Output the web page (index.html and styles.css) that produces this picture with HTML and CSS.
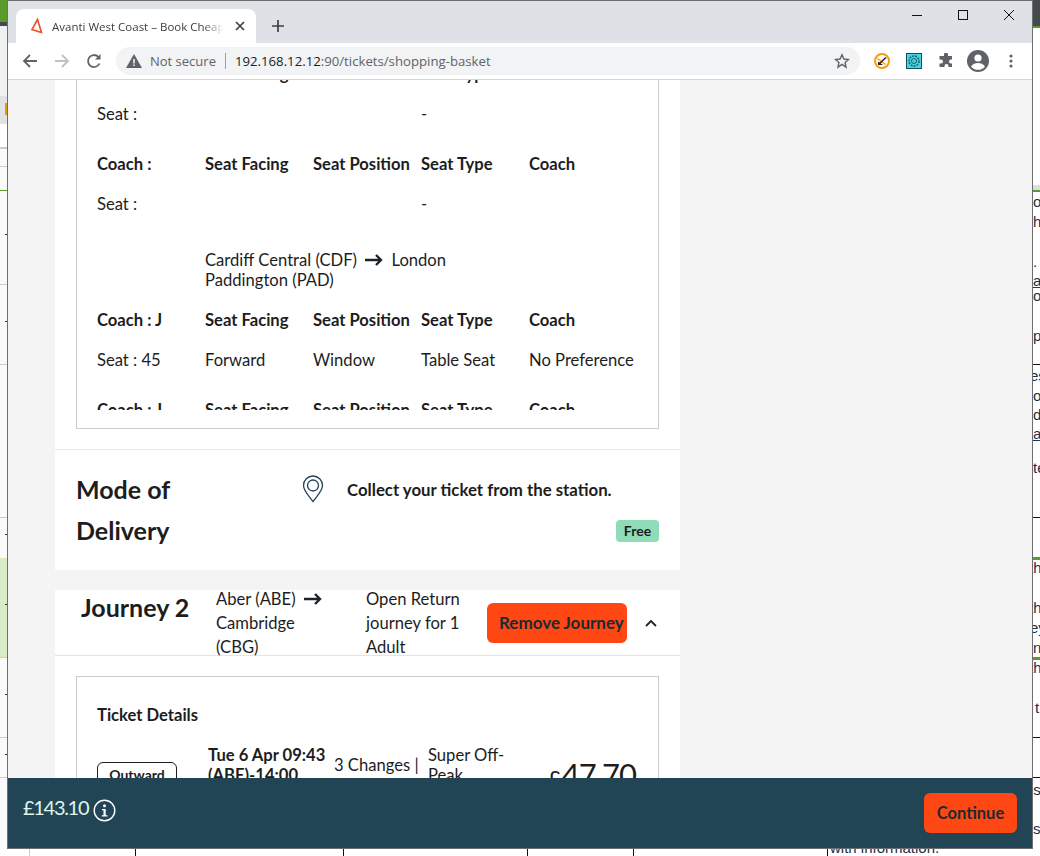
FILE: index.html
```html
<!DOCTYPE html>
<html>
	<head>
		<meta charset="UTF-8">
		<title>Avanti West Coast</title>
		<link rel="stylesheet" href="styles.css">
	</head>
	<body>
		<!-- desktop behind the browser window -->
		<svg class="desktop" width="1040" height="856" viewBox="0 0 1040 856">
			<rect x="0" y="0" width="8" height="22" fill="#5c9a2c"/>
			<rect x="0" y="22" width="8" height="4" fill="#44484f"/>
			<rect x="0" y="26" width="8" height="70" fill="#f0f0f0"/>
			<rect x="0" y="96" width="8" height="28" fill="#e2e2e2"/>
			<rect x="5" y="103" width="3" height="12" fill="#e09a10"/>
			<rect x="0" y="147" width="8" height="703" fill="#fafafa"/>
			<rect x="0" y="147" width="8" height="2" fill="#ccc"/>
			<rect x="0" y="166" width="8" height="1" fill="#ccc"/>
			<rect x="0" y="190" width="8" height="1" fill="#5c9a2c"/>
			<rect x="0" y="284" width="8" height="1" fill="#ccc"/>
			<rect x="0" y="364" width="8" height="1" fill="#ccc"/>
			<rect x="0" y="517" width="8" height="1" fill="#ccc"/>
			<rect x="0" y="558" width="8" height="100" fill="#d8ecc6"/>
			<rect x="0" y="657" width="8" height="1" fill="#ccc"/>
			<rect x="0" y="737" width="8" height="1" fill="#ccc"/>
			<rect x="0" y="777" width="8" height="1" fill="#ccc"/>
			<rect x="5" y="234" width="3" height="1" fill="#333"/>
			<rect x="5" y="321" width="3" height="1" fill="#333"/>
			<rect x="5" y="534" width="3" height="1" fill="#333"/>
			<rect x="5" y="604" width="3" height="1" fill="#333"/>
			<rect x="5" y="694" width="3" height="1" fill="#333"/>
			<rect x="5" y="754" width="3" height="1" fill="#333"/>
			<rect x="1032" y="0" width="8" height="26" fill="#44484f"/>
			<rect x="1032" y="26" width="8" height="2" fill="#5c9a2c"/>
			<rect x="1032" y="185" width="8" height="5" fill="#ddd"/>
			<rect x="1032" y="190" width="8" height="2" fill="#5c9a2c"/>
			<rect x="1032" y="364" width="8" height="1" fill="#111"/>
			<rect x="1032" y="517" width="8" height="1" fill="#111"/>
			<rect x="1032" y="557" width="8" height="3" fill="#5c9a2c"/>
			<rect x="1032" y="657" width="8" height="3" fill="#5c9a2c"/>
			<rect x="1032" y="737" width="8" height="1" fill="#111"/>
			<rect x="1032" y="777" width="8" height="1" fill="#111"/>
			<rect x="1033" y="287" width="7" height="1" fill="#1b3a5c"/>
			<rect x="1033" y="440" width="7" height="1" fill="#1b3a5c"/>
			<rect x="29" y="849" width="1" height="7" fill="#ccc"/>
			<rect x="135" y="849" width="1" height="7" fill="#111"/>
			<rect x="343" y="849" width="1" height="7" fill="#111"/>
			<rect x="527" y="849" width="1" height="7" fill="#111"/>
			<rect x="633" y="849" width="1" height="7" fill="#111"/>
			<rect x="827" y="849" width="1" height="7" fill="#111"/>
			<g class="desktop-text">
				<text x="1033" y="207">o</text>
				<text x="1033" y="227">h</text>
				<text x="1033" y="267">.</text>
				<text x="1033" y="286">at</text>
				<text x="1033" y="301">o</text>
				<text x="1033" y="341">p</text>
				<text x="1030" y="381">es</text>
				<text x="1033" y="401">o</text>
				<text x="1033" y="420">d</text>
				<text x="1033" y="439">at</text>
				<text x="1033" y="473">te</text>
				<text x="1029" y="573">th</text>
				<text x="1029" y="613">th</text>
				<text x="1030" y="633">ey</text>
				<text x="1033" y="653">n</text>
				<text x="1029" y="673">th</text>
				<text x="1035" y="713">t</text>
				<text x="1025" y="795">os</text>
				<text x="1033" y="834">s</text>
				<text x="830" y="853">with information.</text>
			</g>
		</svg>

		<div class="window">
			<div class="tabstrip">
				<div class="tab">
					<svg class="tab-logo" width="14" height="16" viewBox="0 0 14 16">
						<path d="M7.500 1.500 2 11.500l9.500 3z M7.500 1.500l4 13" fill="none" stroke="#f04e23" stroke-width="1.600"/>
					</svg>
					<span class="tab-title">Avanti West Coast – Book Cheap Train Tickets</span>
					<svg class="tab-close" width="10" height="10" viewBox="0 0 10 10">
						<path d="M1 1l8 8M9 1l-8 8" stroke="#3c4043" stroke-width="1.700"/>
					</svg>
				</div>
				<svg class="tab-new" width="12" height="12" viewBox="0 0 12 12">
					<path d="M6 0v12M0 6h12" stroke="#3c4043" stroke-width="1.700"/>
				</svg>
				<div class="win-btns">
					<svg width="10" height="10" viewBox="0 0 10 10"><path d="M0 5.500h10" stroke="#111"/></svg>
					<svg width="10" height="10" viewBox="0 0 10 10"><rect x=".5" y=".5" width="9" height="9" fill="none" stroke="#111"/></svg>
					<svg width="10" height="10" viewBox="0 0 10 10"><path d="M0 0l10 10M10 0L0 10" stroke="#111"/></svg>
				</div>
			</div>

			<div class="toolbar">
				<svg class="nav-btn" width="16" height="16" viewBox="0 0 16 16">
					<path d="M15 8H2M8 2 2 8l6 6" fill="none" stroke="#5f6368" stroke-width="1.800"/>
				</svg>
				<svg class="nav-btn" width="16" height="16" viewBox="0 0 16 16">
					<path d="M1 8h13M8 2l6 6-6 6" fill="none" stroke="#bdc1c6" stroke-width="1.800"/>
				</svg>
				<svg class="nav-btn" width="16" height="16" viewBox="0 0 16 16">
					<path d="M13.500 10.500A6 6 0 1 1 12.300 3.800" fill="none" stroke="#5f6368" stroke-width="1.800"/>
					<path d="M14.500 1v5.500H9z" fill="#5f6368"/>
				</svg>
				<div class="omnibox">
					<svg width="16" height="14" viewBox="0 0 16 14">
						<path d="M8 0l8 14H0z" fill="#5f6368"/>
						<path d="M7.200 5h1.600v4.500H7.200zM7.200 10.500h1.600v1.600H7.200z" fill="#f1f3f4"/>
					</svg>
					<span class="not-secure">Not secure</span>
					<span class="omni-sep"></span>
					<span class="url"><b>192.168.12.12</b>:90/tickets/shopping-basket</span>
					<svg class="star" width="16" height="16" viewBox="0 0 16 16">
						<path d="M8 1.800l1.900 4.200 4.600.5-3.400 3.100.9 4.500L8 11.400l-4 2.700.9-4.500L1.500 6.500l4.600-.5z" fill="none" stroke="#5f6368" stroke-width="1.400"/>
					</svg>
				</div>
				<div class="ext-icons">
					<svg width="16" height="16" viewBox="0 0 16 16">
						<circle cx="8" cy="8" r="7" fill="#fff" stroke="#f59c12" stroke-width="2"/>
						<path d="M3.500 5.500l8 6" stroke="#f59c12" stroke-width="1.400"/>
						<path d="M12 4.500 5.500 10.500" stroke="#222" stroke-width="1.600"/>
						<path d="M4 8.500l5 3.500H4z" fill="#222"/>
					</svg>
					<svg width="16" height="16" viewBox="0 0 16 16">
						<rect x=".5" y=".5" width="15" height="15" fill="#45d4e4" stroke="#1d4a5c"/>
						<circle cx="8" cy="8" r="5" fill="none" stroke="#1d5c70" stroke-width="1.500" stroke-dasharray="2 1"/>
						<circle cx="8" cy="8" r="2.500" fill="none" stroke="#1d5c70"/>
					</svg>
					<svg width="16" height="16" viewBox="0 0 16 16">
						<path d="M6 1.500a2 2 0 0 1 4 0V3h4v3.500h-1a2 2 0 0 0 0 4h1V14h-3.500v-1a2 2 0 0 0-4 0v1H1.500v-3.500H3a2 2 0 0 0 0-4H1.500V3H6z" fill="#5f6368"/>
					</svg>
					<svg class="avatar" width="22" height="22" viewBox="0 0 22 22">
						<circle cx="11" cy="11" r="11" fill="#5f6368"/>
						<circle cx="11" cy="8" r="3.600" fill="#fff"/>
						<path d="M4 16.500c1.500-2.500 4.500-3.500 7-3.500s5.500 1 7 3.500a9 9 0 0 1-14 0z" fill="#fff"/>
					</svg>
					<svg class="dots" width="4" height="14" viewBox="0 0 4 14">
						<circle cx="2" cy="2" r="1.600" fill="#5f6368"/>
						<circle cx="2" cy="7" r="1.600" fill="#5f6368"/>
						<circle cx="2" cy="12" r="1.600" fill="#5f6368"/>
					</svg>
				</div>
			</div>

			<div class="viewport">
				<div class="basket">
					<div class="panel-wrap seats-wrap">
						<div class="panel seats">
							<div class="seat-list">
								<div class="seat-row head">
									<span>Coach :</span><span>Seat Facing</span><span>Seat Position</span><span>Seat Type</span><span>Coach</span>
								</div>
								<div class="seat-row value">
									<span>Seat :</span><span></span><span></span><span>-</span><span></span>
								</div>
								<div class="seat-row head">
									<span>Coach :</span><span>Seat Facing</span><span>Seat Position</span><span>Seat Type</span><span>Coach</span>
								</div>
								<div class="seat-row value before-route">
									<span>Seat :</span><span></span><span></span><span>-</span><span></span>
								</div>
								<div class="route-row">
									Cardiff Central (CDF)
									<svg class="arrow" width="18" height="12" viewBox="0 0 18 12"><path d="M0 6h16M11 1l5 5-5 5" fill="none" stroke="#1d2329" stroke-width="2.400"/></svg>
									London Paddington (PAD)
								</div>
								<div class="seat-row head">
									<span>Coach : J</span><span>Seat Facing</span><span>Seat Position</span><span>Seat Type</span><span>Coach</span>
								</div>
								<div class="seat-row value">
									<span>Seat : 45</span><span>Forward</span><span>Window</span><span>Table Seat</span><span>No Preference</span>
								</div>
								<div class="seat-row head">
									<span>Coach : J</span><span>Seat Facing</span><span>Seat Position</span><span>Seat Type</span><span>Coach</span>
								</div>
							</div>
						</div>
					</div>

					<div class="delivery">
						<h2 class="delivery-title">Mode of Delivery</h2>
						<div class="delivery-info">
							<div class="delivery-line">
								<svg width="22" height="28" viewBox="0 0 22 28">
									<path d="M11 26.500C6 20 1.500 15.500 1.500 10.500a9.500 9.500 0 0 1 19 0C20.500 15.500 16 20 11 26.500z" fill="none" stroke="#224556" stroke-width="1.300"/>
									<circle cx="11" cy="10.500" r="5.500" fill="none" stroke="#224556" stroke-width="1.300"/>
								</svg>
								<strong>Collect your ticket from the station.</strong>
							</div>
							<span class="free">Free</span>
						</div>
					</div>

					<div class="journey-head">
						<h2 class="journey-title">Journey 2</h2>
						<div class="journey-route">
							Aber (ABE)
							<svg class="arrow" width="18" height="12" viewBox="0 0 18 12"><path d="M0 6h16M11 1l5 5-5 5" fill="none" stroke="#1d2329" stroke-width="2.400"/></svg>
							Cambridge (CBG)
						</div>
						<div class="journey-type">Open Return journey for 1 Adult</div>
						<button class="btn-remove">Remove Journey</button>
						<svg class="chevron" width="12" height="8" viewBox="0 0 12 8"><path d="M1 7l5-5 5 5" fill="none" stroke="#1d2329" stroke-width="1.800"/></svg>
					</div>

					<div class="panel-wrap">
						<div class="panel ticket">
							<div class="ticket-title">Ticket Details</div>
							<div class="ticket-row">
								<span class="pill">Outward</span>
								<div class="ticket-time">Tue 6 Apr 09:43 (ABE)-14:00</div>
								<div class="ticket-changes">3 Changes |</div>
								<div class="ticket-fare">Super Off-Peak</div>
								<div class="ticket-price"><small>£</small>47.70</div>
							</div>
						</div>
					</div>
				</div>
			</div>

			<div class="footer">
				<span class="total">£143.10</span>
				<svg class="info" width="23" height="23" viewBox="0 0 23 23">
					<circle cx="11.500" cy="11.500" r="10.300" fill="none" stroke="#fff" stroke-width="1.400"/>
					<circle cx="11.500" cy="6.800" r="1.500" fill="#fff"/>
					<path d="M9 10h3.700v6.200H14.500v1.300H8.800v-1.300h1.700v-4.900H9z" fill="#fff"/>
				</svg>
				<button class="btn-continue">Continue</button>
			</div>
		</div>
	</body>
</html>
```

FILE: styles.css
```css
*{margin: 0;padding: 0;box-sizing: border-box;}
html,body{width: 1040px;height: 856px;overflow: hidden;}
body{position: relative;background: #fff;font-family: "Lato","Noto Sans",sans-serif;color: #1d1d1d;}

.desktop{position: absolute;left: 0;top: 0;}
.desktop-text{font-family: "Liberation Sans",sans-serif;font-size: 15px;fill: #1b2f4c;}

.window{position: absolute;left: 7px;top: 0;width: 1026px;height: 849px;border: 1px solid #6e6e6e;display: flex;flex-direction: column;overflow: hidden;}

/* browser chrome */
.tabstrip{height: 42px;flex: none;background: #dee1e6;display: flex;align-items: flex-end;padding-left: 8px;}
.tab{width: 240px;height: 34px;background: #fff;border-radius: 8px 8px 0 0;display: flex;align-items: center;padding: 0 11px 0 14px;font-family: "Open Sans",sans-serif;font-size: 11.5px;color: #3c4043;}
.tab-logo{flex: none;margin-right: 8px;}
.tab-title{flex: 1;white-space: nowrap;overflow: hidden;-webkit-mask-image: linear-gradient(to right,#000 88%,transparent);mask-image: linear-gradient(to right,#000 88%,transparent);}
.tab-close{flex: none;margin-left: 11px;}
.tab-new{flex: none;margin: 0 0 11px 16px;}
.win-btns{margin-left: auto;align-self: flex-start;display: flex;gap: 36px;padding: 9px 18px 0 0;}

.toolbar{height: 37px;flex: none;background: #fff;border-bottom: 1px solid #d5d5d5;display: flex;align-items: center;padding-left: 14px;}
.nav-btn{flex: none;margin-right: 16px;}
.omnibox{width: 744px;height: 28px;margin-left: -2px;background: #f1f3f4;border-radius: 14px;display: flex;align-items: center;padding: 0 10px;font-family: "Open Sans",sans-serif;font-size: 13px;}
.not-secure{color: #5f6368;margin-left: 8px;white-space: nowrap;}
.omni-sep{width: 1px;height: 16px;background: #9aa0a6;margin: 0 9px;}
.url{color: #5f6368;white-space: nowrap;font-size: 13.2px;}
.url b{font-weight: 400;color: #202124;}
.star{margin-left: auto;}
.ext-icons{display: flex;align-items: center;gap: 16px;margin-left: 14px;}
.avatar{margin: 0 -3px;}
.dots{margin-left: 7px;}

/* page */
.viewport{flex: 1;min-height: 0;background: #f4f4f4;overflow: hidden;}
.basket{width: 625px;margin: -40px 0 0 47px;font-size: 16.6px;}
.panel-wrap{background: #fff;padding: 20px 21px 0;}
.panel{border: 1px solid #ccc;background: #fff;}
.seats-wrap{padding-top: 0;padding-bottom: 20px;}
.seats{height: 389px;padding: 0 20px 19px;}
.seat-list{height: 369px;overflow: hidden;padding-top: 23px;line-height: 20px;}
.seat-row{display: grid;grid-template-columns: repeat(5,108px);}
.seat-row span{white-space: nowrap;}
.seat-row.head{font-weight: 700;margin-bottom: 20px;}
.seat-row.value{margin-bottom: 30px;}
.seat-row.before-route{margin-bottom: 36px;}
.route-row{margin: 0 0 20px 108px;width: 270px;}
.arrow{margin: 0 4px;}

.delivery{background: #fff;border-top: 1px solid #e8e8e8;height: 121px;padding: 19px 21px 0;display: flex;}
.delivery-title{width: 226px;flex: none;font-size: 25px;line-height: 40.5px;font-weight: 700;padding-right: 100px;}
.delivery-info{flex: 1;display: flex;flex-direction: column;align-items: flex-end;}
.delivery-line{width: 100%;height: 38px;margin: 1px 0 2px;display: flex;align-items: center;gap: 23px;font-size: 16.8px;}
.free{margin-top: 10px;width: 43px;height: 22px;border-radius: 4px;background: #8fdcb9;font-size: 14px;font-weight: 700;line-height: 22px;text-align: center;}

.journey-head{margin-top: 20px;height: 66px;background: #fff;border-bottom: 1px solid #e4e4e4;display: flex;align-items: center;line-height: 24px;}
.journey-title{width: 161px;flex: none;padding-left: 26px;font-size: 25px;font-weight: 700;margin-bottom: 31px;white-space: nowrap;}
.journey-route{width: 150px;flex: none;padding-right: 40px;}
.journey-route .arrow{margin: 0 0 0 4px;}
.journey-type{width: 121px;flex: none;padding-right: 15px;}
.btn-remove{width: 140px;height: 40px;flex: none;border: 0;border-radius: 6px;background: #fe4713;color: #1b2a33;font-family: inherit;font-size: 17px;font-weight: 700;text-align: left;padding-left: 12px;white-space: nowrap;}
.chevron{margin-left: 18px;}

.ticket{height: 200px;padding: 0 20px;}
.ticket-title{margin-top: 28px;font-weight: 700;line-height: 20px;}
.ticket-row{display: flex;margin-top: 20px;line-height: 20px;}
.pill{width: 80px;height: 30px;margin-top: 17px;flex: none;border: 1px solid #1d1d1d;border-radius: 6px;font-size: 14px;font-weight: 700;text-align: center;line-height: 24px;}
.ticket-time{width: 126px;margin-left: 31px;flex: none;font-weight: 700;}
.ticket-changes{width: 94px;flex: none;padding-top: 10px;white-space: nowrap;}
.ticket-fare{width: 120px;flex: none;padding-right: 30px;}
.ticket-price{font-size: 31px;line-height: 40px;margin-top: 9px;letter-spacing: -1px;white-space: nowrap;}
.ticket-price small{font-size: 22px;margin-right: 2px;}

/* sticky total */
.footer{height: 70px;flex: none;background: #224556;display: flex;align-items: center;padding: 0 15px;}
.total{font-size: 20px;letter-spacing: -1.3px;color: #dff5ea;margin: -12px 5px 0 0;}
.info{margin-top: -5px;}
.btn-continue{margin-left: auto;width: 93px;height: 40px;border: 0;border-radius: 6px;background: #fe4713;color: #1b2a33;font-family: inherit;font-size: 16.5px;font-weight: 700;}
```
